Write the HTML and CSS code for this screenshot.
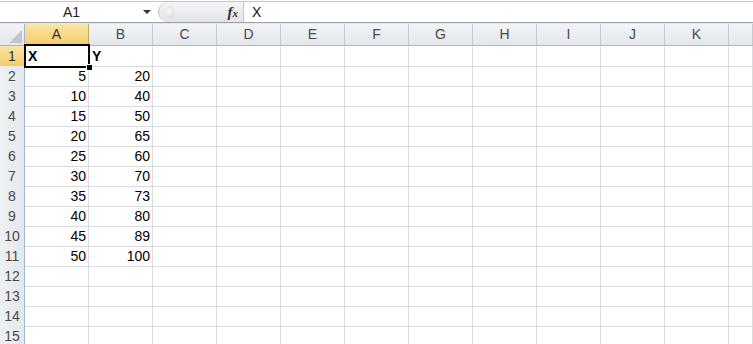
FILE: index.html
```html
<!DOCTYPE html>
<html lang="en">
<head>
  <meta charset="UTF-8">
  <title>Book1 - Excel</title>
  <link rel="stylesheet" href="styles.css">
</head>
<body>
  <div class="fbar">
    <div class="namebox">
      <span class="ref">A1</span>
      <span class="drop"></span>
    </div>
    <div class="pill">
      <span class="knob"></span>
      <span class="fx">f<small>x</small></span>
    </div>
    <div class="input">X</div>
  </div>
  <div class="gap"></div>

  <div class="sheet">
    <div class="row head">
      <div class="corner"><span class="tri"></span></div>
      <div class="ch sel">A</div><div class="ch">B</div><div class="ch">C</div><div class="ch">D</div>
      <div class="ch">E</div><div class="ch">F</div><div class="ch">G</div><div class="ch">H</div>
      <div class="ch">I</div><div class="ch">J</div><div class="ch">K</div><div class="ch"></div>
    </div>
    <div class="row">
      <div class="rh sel">1</div>
      <div class="c txt active">X<span class="box"><span class="handle"></span></span></div><div class="c txt">Y</div>
      <div class="c"></div><div class="c"></div><div class="c"></div><div class="c"></div><div class="c"></div>
      <div class="c"></div><div class="c"></div><div class="c"></div><div class="c"></div><div class="c"></div>
    </div>
    <div class="row">
      <div class="rh">2</div><div class="c num">5</div><div class="c num">20</div>
      <div class="c"></div><div class="c"></div><div class="c"></div><div class="c"></div><div class="c"></div>
      <div class="c"></div><div class="c"></div><div class="c"></div><div class="c"></div><div class="c"></div>
    </div>
    <div class="row">
      <div class="rh">3</div><div class="c num">10</div><div class="c num">40</div>
      <div class="c"></div><div class="c"></div><div class="c"></div><div class="c"></div><div class="c"></div>
      <div class="c"></div><div class="c"></div><div class="c"></div><div class="c"></div><div class="c"></div>
    </div>
    <div class="row">
      <div class="rh">4</div><div class="c num">15</div><div class="c num">50</div>
      <div class="c"></div><div class="c"></div><div class="c"></div><div class="c"></div><div class="c"></div>
      <div class="c"></div><div class="c"></div><div class="c"></div><div class="c"></div><div class="c"></div>
    </div>
    <div class="row">
      <div class="rh">5</div><div class="c num">20</div><div class="c num">65</div>
      <div class="c"></div><div class="c"></div><div class="c"></div><div class="c"></div><div class="c"></div>
      <div class="c"></div><div class="c"></div><div class="c"></div><div class="c"></div><div class="c"></div>
    </div>
    <div class="row">
      <div class="rh">6</div><div class="c num">25</div><div class="c num">60</div>
      <div class="c"></div><div class="c"></div><div class="c"></div><div class="c"></div><div class="c"></div>
      <div class="c"></div><div class="c"></div><div class="c"></div><div class="c"></div><div class="c"></div>
    </div>
    <div class="row">
      <div class="rh">7</div><div class="c num">30</div><div class="c num">70</div>
      <div class="c"></div><div class="c"></div><div class="c"></div><div class="c"></div><div class="c"></div>
      <div class="c"></div><div class="c"></div><div class="c"></div><div class="c"></div><div class="c"></div>
    </div>
    <div class="row">
      <div class="rh">8</div><div class="c num">35</div><div class="c num">73</div>
      <div class="c"></div><div class="c"></div><div class="c"></div><div class="c"></div><div class="c"></div>
      <div class="c"></div><div class="c"></div><div class="c"></div><div class="c"></div><div class="c"></div>
    </div>
    <div class="row">
      <div class="rh">9</div><div class="c num">40</div><div class="c num">80</div>
      <div class="c"></div><div class="c"></div><div class="c"></div><div class="c"></div><div class="c"></div>
      <div class="c"></div><div class="c"></div><div class="c"></div><div class="c"></div><div class="c"></div>
    </div>
    <div class="row">
      <div class="rh">10</div><div class="c num">45</div><div class="c num">89</div>
      <div class="c"></div><div class="c"></div><div class="c"></div><div class="c"></div><div class="c"></div>
      <div class="c"></div><div class="c"></div><div class="c"></div><div class="c"></div><div class="c"></div>
    </div>
    <div class="row">
      <div class="rh">11</div><div class="c num">50</div><div class="c num">100</div>
      <div class="c"></div><div class="c"></div><div class="c"></div><div class="c"></div><div class="c"></div>
      <div class="c"></div><div class="c"></div><div class="c"></div><div class="c"></div><div class="c"></div>
    </div>
    <div class="row">
      <div class="rh">12</div><div class="c"></div><div class="c"></div>
      <div class="c"></div><div class="c"></div><div class="c"></div><div class="c"></div><div class="c"></div>
      <div class="c"></div><div class="c"></div><div class="c"></div><div class="c"></div><div class="c"></div>
    </div>
    <div class="row">
      <div class="rh">13</div><div class="c"></div><div class="c"></div>
      <div class="c"></div><div class="c"></div><div class="c"></div><div class="c"></div><div class="c"></div>
      <div class="c"></div><div class="c"></div><div class="c"></div><div class="c"></div><div class="c"></div>
    </div>
    <div class="row">
      <div class="rh">14</div><div class="c"></div><div class="c"></div>
      <div class="c"></div><div class="c"></div><div class="c"></div><div class="c"></div><div class="c"></div>
      <div class="c"></div><div class="c"></div><div class="c"></div><div class="c"></div><div class="c"></div>
    </div>
    <div class="row">
      <div class="rh">15</div><div class="c"></div><div class="c"></div>
      <div class="c"></div><div class="c"></div><div class="c"></div><div class="c"></div><div class="c"></div>
      <div class="c"></div><div class="c"></div><div class="c"></div><div class="c"></div><div class="c"></div>
    </div>
  </div>
</body>
</html>
```

FILE: styles.css
```css
body {
  margin: 0;
  background: #fff;
  font-family: "Liberation Sans", Arial, sans-serif;
  font-size: 14px;
  color: #000;
  overflow: hidden;
}

/* formula bar */
.fbar {
  display: flex;
  height: 20px;
  margin-top: 1px;
  border-top: 1px solid #c3c6ca;
  border-bottom: 1px solid #9ea3a9;
  background: #fff;
}
.namebox {
  width: 158px;
  display: flex;
  align-items: center;
}
.ref {
  flex: 1;
  text-align: center;
  color: #222;
}
.drop {
  width: 0;
  height: 0;
  border-left: 4px solid transparent;
  border-right: 4px solid transparent;
  border-top: 4px solid #333;
  margin-right: 7px;
}
.pill {
  width: 84px;
  display: flex;
  align-items: center;
  justify-content: space-between;
  background: linear-gradient(#f4f5f7, #e2e5e9);
  border-left: 1px solid #b9bec4;
  border-radius: 10px 0 0 10px;
  border-right: 1px solid #c0c4c8;
}
.knob {
  width: 10px;
  height: 12px;
  margin-left: 6px;
  border-radius: 50%;
  background: radial-gradient(circle at 40% 40%, #fafafa, #cfd3d8);
}
.fx {
  font-family: "Liberation Serif", serif;
  font-style: italic;
  font-weight: bold;
  font-size: 15px;
  color: #333;
  margin-right: 5px;
}
.fx small {
  font-size: 11px;
}
.input {
  flex: 1;
  padding-left: 8px;
  line-height: 20px;
  color: #111;
}
.gap {
  height: 1px;
  background: #e4e7eb;
}

/* grid */
.row {
  display: grid;
  grid-template-columns: 25px repeat(11, 64px) 1fr;
  height: 20px;
}
.row.head {
  height: 22px;
}
.row > div {
  box-sizing: border-box;
  border-right: 1px solid #dadcdd;
  border-bottom: 1px solid #dadcdd;
}
.corner {
  position: relative;
  background: linear-gradient(#f1f3f6, #e3e7ec);
  border-right: 1px solid #9eb6ce !important;
  border-bottom: 1px solid #9eb6ce !important;
}
.tri {
  position: absolute;
  right: 2px;
  bottom: 2px;
  width: 0;
  height: 0;
  border-left: 13px solid transparent;
  border-bottom: 13px solid #c3c7cc;
}
.ch {
  background: linear-gradient(#f2f4f7, #e3e7ed);
  border-right: 1px solid #c5cad0 !important;
  border-bottom: 1px solid #9eb6ce !important;
  text-align: center;
  line-height: 21px;
  color: #4a4a4a;
}
.rh {
  background: linear-gradient(90deg, #eef1f4, #e4e8ec);
  border-right: 1px solid #9eb6ce !important;
  border-bottom: 1px solid #c5cad0 !important;
  text-align: center;
  line-height: 20px;
  color: #4a4a4a;
}
.ch.sel, .rh.sel {
  background: linear-gradient(#f9e5a8, #f4cc66);
  color: #333;
  border-right-color: #c2a660 !important;
  border-bottom-color: #c2a660 !important;
}
.c {
  line-height: 20px;
  white-space: nowrap;
}
.txt {
  font-weight: bold;
  padding-left: 3px;
}
.num {
  text-align: right;
  padding-right: 2px;
}
.active {
  position: relative;
}
.box {
  position: absolute;
  left: -1px;
  top: -2px;
  right: -2px;
  bottom: -2px;
  border: 2px solid #000;
}
.handle {
  position: absolute;
  right: -5px;
  bottom: -5px;
  width: 5px;
  height: 5px;
  background: #000;
  border: 1px solid #fff;
}
```
